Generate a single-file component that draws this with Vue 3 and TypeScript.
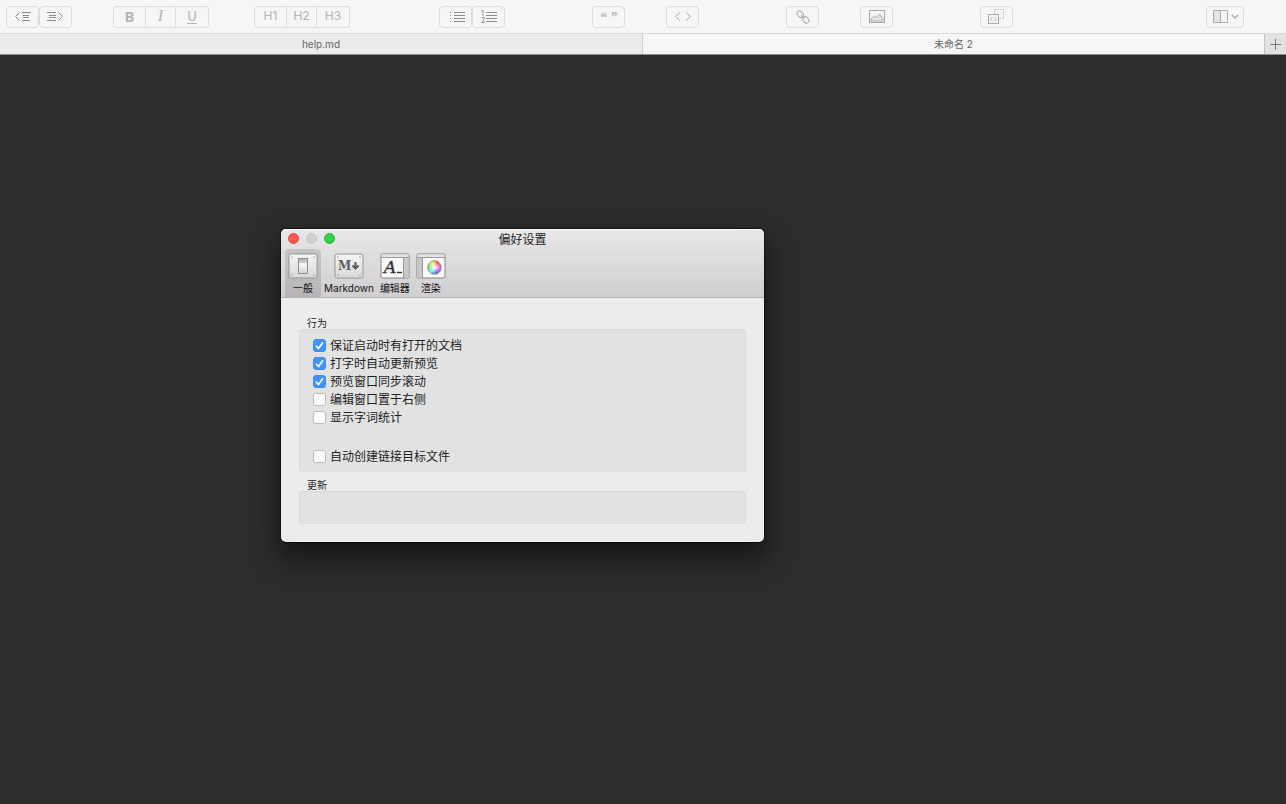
<script setup lang="ts">
import { ref } from 'vue'

interface Option {
  id: string
  label: string
  checked: boolean
  spaced?: boolean
}

const options = ref<Option[]>([
  { id: 'ensure-open', label: '保证启动时有打开的文档', checked: true },
  { id: 'auto-preview', label: '打字时自动更新预览', checked: true },
  { id: 'sync-scroll', label: '预览窗口同步滚动', checked: true },
  { id: 'editor-right', label: '编辑窗口置于右侧', checked: false },
  { id: 'word-count', label: '显示字词统计', checked: false },
  { id: 'create-link', label: '自动创建链接目标文件', checked: false, spaced: true },
])

const panes = [
  { id: 'general', label: '一般' },
  { id: 'markdown', label: 'Markdown' },
  { id: 'editor', label: '编辑器' },
  { id: 'render', label: '渲染' },
]
const activePane = ref('general')

const hues = Array.from({ length: 24 }, (_, i) => {
  const a = (i * 15 * Math.PI) / 180
  const b = ((i * 15 + 16) * Math.PI) / 180
  const p = (t: number) => `${18.5 + 6.5 * Math.cos(t)} ${14.5 + 6.5 * Math.sin(t)}`
  return { d: `M18.5 14.5L${p(a)}A6.5 6.5 0 0 1 ${p(b)}Z`, fill: `hsl(${(300 - i * 15 + 360) % 360} 90% 60%)` }
})
</script>

<template>
  <div class="app">
    <header class="toolbar">
      <div class="group after-indent">
        <button class="tool" aria-label="减少缩进">
          <svg width="17" height="12" viewBox="0 0 17 12" class="dark">
            <path d="M5.500 1.500L1.500 5.500L5.500 9.500M8 1.500H17M9 4.500H15M9 6.500H15M8 9.500H16" />
          </svg>
        </button>
        <button class="tool" aria-label="增加缩进">
          <svg width="17" height="12" viewBox="0 0 17 12" class="dark">
            <path d="M11.500 1.500L15.500 5.500L11.500 9.500M0 1.500H9M2 4.500H9M2 6.500H9M0 9.500H9" />
          </svg>
        </button>
      </div>
      <div class="group joined after-style">
        <button class="tool bold">B</button>
        <button class="tool italic">I</button>
        <button class="tool underline">U</button>
      </div>
      <div class="group joined after-heading">
        <button class="tool">H1</button>
        <button class="tool">H2</button>
        <button class="tool">H3</button>
      </div>
      <div class="group after-wide">
        <button class="tool" aria-label="无序列表">
          <svg width="17" height="12" viewBox="0 0 17 12" class="dark list-icon">
            <path d="M5 1.500H16M5 4.500H16M5 7.500H16M5 10.500H16" />
            <path d="M1 1.500H2M1 4.500H2M1 7.500H2M1 10.500H2" />
          </svg>
        </button>
        <button class="tool" aria-label="有序列表">
          <svg width="18" height="18" viewBox="0 0 18 18" class="dark">
            <path d="M6 4.500H17M6 7.500H17M6 10.500H17M6 13.500H17" />
            <text x="1" y="8" class="digit">1</text>
            <text x="1" y="15" class="digit">2</text>
          </svg>
        </button>
      </div>
      <button class="tool single quote after-narrow" aria-label="引用">“ ”</button>
      <button class="tool single after-wide" aria-label="代码">
        <svg width="18" height="12" viewBox="0 0 18 12" class="medium">
          <path d="M6 1.500L1.500 5.500L6 9.500M12 1.500L16.500 5.500L12 9.500" />
        </svg>
      </button>
      <button class="tool single after-narrow" aria-label="链接">
        <svg width="14" height="14" viewBox="0 0 14 14" class="medium">
          <g transform="rotate(45 7 7)">
            <rect x="-.5" y="4.500" width="7" height="5" rx="2.500" />
            <rect x="7.500" y="4.500" width="7" height="5" rx="2.500" />
            <path d="M4.500 7H9.500" />
          </g>
        </svg>
      </button>
      <button class="tool single after-wide" aria-label="图片">
        <svg width="16" height="14" viewBox="0 0 16 14" class="medium">
          <rect x=".5" y=".5" width="15" height="12" />
          <path class="hill" d="M2 9L5.500 6L7.500 7.500L10.500 4L14 8.500V11H2Z" />
        </svg>
      </button>
      <button class="tool single" aria-label="复制 HTML">
        <svg width="17" height="17" viewBox="0 0 17 17">
          <path d="M6.500 6V1.500H15.500V10.500H11" stroke-dasharray="1.500 1" />
          <rect x=".5" y="6.500" width="10" height="9" class="medium" />
          <path d="M4.500 9L2.500 11L4.500 13M6.500 9L8.500 11L6.500 13" />
        </svg>
      </button>
      <button class="tool layout" aria-label="布局">
        <svg width="27" height="13" viewBox="0 0 27 13" class="medium">
          <rect x="1" y="1" width="7" height="11" class="pane-fill" />
          <path d="M1.500 .500H15.500V12.500H1.500ZM8.500 .500V12.500" />
          <path d="M20 5L23 8L26 5" stroke-width="1.300" />
        </svg>
      </button>
    </header>

    <nav class="tabs">
      <button class="tab">help.md</button>
      <button class="tab current">未命名 2</button>
      <button class="new-tab" aria-label="新建标签页">
        <svg width="11" height="11" viewBox="0 0 11 11"><path d="M5.500 0V11M0 5.500H11" /></svg>
      </button>
    </nav>

    <main class="desktop">
      <section class="window" role="dialog" aria-labelledby="window-title">
        <header class="chrome">
          <div class="titlebar">
            <div class="lights">
              <button class="light close" aria-label="关闭"></button>
              <button class="light minimize" aria-label="最小化"></button>
              <button class="light zoom" aria-label="缩放"></button>
            </div>
            <h1 id="window-title">偏好设置</h1>
          </div>
          <div class="panes">
            <button
              v-for="pane in panes"
              :key="pane.id"
              class="pane"
              :class="{ active: pane.id === activePane }"
              @click="activePane = pane.id"
            >
              <svg width="30" height="26" viewBox="0 0 30 26">
                <defs>
                  <linearGradient id="plate" x1="0" y1="0" x2="0" y2="1">
                    <stop offset="0" stop-color="#f6f6f6" />
                    <stop offset="1" stop-color="#d8d8d8" />
                  </linearGradient>
                  <linearGradient id="knob" x1="0" y1="0" x2="0" y2="1">
                    <stop offset="0" stop-color="#b4b4b4" />
                    <stop offset=".3" stop-color="#d0d0d0" />
                    <stop offset=".34" stop-color="#f8f8f8" />
                    <stop offset="1" stop-color="#d4d4d4" />
                  </linearGradient>
                  <radialGradient id="glow">
                    <stop offset="0" stop-color="#fff" />
                    <stop offset="1" stop-color="#fff" stop-opacity="0" />
                  </radialGradient>
                </defs>
                <template v-if="pane.id === 'general' || pane.id === 'markdown'">
                  <rect x="1" y="1" width="28" height="24" rx="2" fill="url(#plate)" stroke="#969696" />
                  <g fill="#888">
                    <circle cx="4" cy="4" r=".7" /><circle cx="26" cy="4" r=".7" />
                    <circle cx="4" cy="22" r=".7" /><circle cx="26" cy="22" r=".7" />
                  </g>
                </template>
                <rect v-if="pane.id === 'general'" x="10.500" y="5.500" width="9" height="15" fill="url(#knob)" stroke="#8c8c8c" />
                <template v-if="pane.id === 'markdown'">
                  <text x="4" y="17" class="mark">M</text>
                  <path d="M21.500 9V16M18.500 12.500L21.500 15.500L24.500 12.500" fill="none" stroke="#5c5c5c" stroke-width="2" />
                </template>
                <template v-if="pane.id === 'editor' || pane.id === 'render'">
                  <rect x="1" y="1" width="28" height="24" rx="1" fill="#f8f8f8" stroke="#858585" />
                  <path d="M1.500 1.500H28.500V4H1.500Z" fill="#e4e4e4" />
                  <path d="M1 4.500H29" stroke="#999" />
                </template>
                <template v-if="pane.id === 'editor'">
                  <path d="M24 5H28.500V24.500H24Z" fill="#c8c8c8" />
                  <path d="M23.500 5V25" stroke="#999" />
                  <text x="4" y="20" class="letter">A</text>
                  <path d="M17 19.500H22" stroke="#333" stroke-width="1.400" />
                </template>
                <template v-if="pane.id === 'render'">
                  <path d="M1.500 5H6V24.500H1.500Z" fill="#c8c8c8" />
                  <path d="M6.500 5V25" stroke="#999" />
                  <path v-for="hue in hues" :key="hue.fill" :d="hue.d" :fill="hue.fill" />
                  <circle cx="18.500" cy="14.500" r="6" fill="url(#glow)" />
                  <circle cx="18.500" cy="14.500" r="6.800" fill="none" stroke="#777" stroke-width=".8" />
                </template>
              </svg>
              <span>{{ pane.label }}</span>
            </button>
          </div>
        </header>

        <div class="content">
          <fieldset>
            <legend>行为</legend>
            <div class="box behavior">
              <label v-for="option in options" :key="option.id" class="option" :class="{ spaced: option.spaced }" :for="option.id">
                <span class="check">
                  <input :id="option.id" v-model="option.checked" type="checkbox" />
                  <svg v-if="option.checked" width="13" height="13" viewBox="0 0 13 13"><path d="M3 6.800L5.500 9.500L10 3.200" /></svg>
                </span>
                <span class="caption">{{ option.label }}</span>
              </label>
            </div>
          </fieldset>
          <fieldset>
            <legend>更新</legend>
            <div class="box updates"></div>
          </fieldset>
        </div>
      </section>
    </main>
  </div>
</template>

<style>
html,
body,
#app {
  height: 100%;
}
body {
  margin: 0;
}
</style>

<style scoped>
.app {
  display: flex;
  flex-direction: column;
  min-height: 100%;
  background: #2d2d2d;
  font-family: Inter, "Noto Sans CJK SC", sans-serif;
  font-size: 12px;
  color: #222;
}
button {
  margin: 0;
  padding: 0;
  border: 0;
  background: none;
  font: inherit;
  color: inherit;
}
svg {
  display: block;
}
.toolbar {
  display: flex;
  align-items: center;
  box-sizing: border-box;
  height: 34px;
  padding: 0 42px 0 6px;
  background: #f6f6f6;
  border-bottom: 1px solid #dadada;
}
.group {
  display: flex;
}
.tool {
  display: flex;
  align-items: center;
  justify-content: center;
  box-sizing: border-box;
  flex: none;
  width: 33px;
  height: 22px;
  border: 1px solid #dcdcdc;
  border-radius: 4px;
  font-size: 12px;
  line-height: 18px;
  color: #b4b4b4;
}
.joined .tool {
  border-radius: 0;
  padding-bottom: 2px;
}
.joined .tool + .tool {
  border-left: 0;
}
.joined .tool:first-child {
  border-radius: 4px 0 0 4px;
}
.joined .tool:nth-child(2) {
  width: 30px;
}
.joined .tool:last-child {
  border-radius: 0 4px 4px 0;
}
.after-indent {
  margin-right: 41px;
}
.after-style {
  margin-right: 45px;
}
.after-heading {
  margin-right: 89px;
}
.after-wide {
  margin-right: 87px;
}
.after-narrow {
  margin-right: 41px;
}
.tool.bold {
  font-family: "Noto Sans", sans-serif;
  font-size: 15px;
  font-weight: 700;
}
.tool.italic {
  font-family: "Liberation Serif", serif;
  font-size: 16px;
  font-style: italic;
}
.tool.underline {
  font-size: 13px;
  text-decoration: underline;
  text-underline-offset: 2px;
}
.tool.quote {
  font-family: "Liberation Serif", serif;
  font-size: 14px;
  font-weight: 700;
  font-style: italic;
  padding-top: 2px;
}
.tool svg {
  fill: none;
  stroke: #bdbdbd;
}
.tool .medium,
.tool svg.medium {
  stroke: #aaa;
}
.tool svg.dark {
  stroke: #8c8c8c;
}
.tool .list-icon {
  margin-left: 4px;
}
.tool .digit {
  fill: #777;
  stroke: none;
  font-size: 7px;
}
.tool .hill,
.tool .pane-fill {
  fill: #e4e4e4;
}
.tool .pane-fill {
  stroke: none;
}
.layout {
  width: 38px;
  margin-left: auto;
}
.tabs {
  display: flex;
  height: 20px;
  background: #ebebeb;
  border-bottom: 1px solid #8c8c8c;
}
.tab {
  flex: 643 1 0;
  font-size: 10px;
  line-height: 18px;
  padding-bottom: 1px;
  color: #666;
}
.tab.current {
  flex-grow: 622;
  background: #f6f6f6;
  border-left: 1px solid #d2d2d2;
}
.new-tab {
  display: grid;
  place-items: center;
  box-sizing: border-box;
  width: 22px;
  background: #e2e2e2;
  border-left: 1px solid #c4c4c4;
}
.new-tab svg {
  stroke: #777;
}
.desktop {
  position: relative;
  flex: 1;
}
.window {
  position: absolute;
  top: 174px;
  left: 281px;
  width: 483px;
  overflow: hidden;
  border-radius: 5px;
  background: #ececec;
  box-shadow: 0 0 1px 1px rgba(0, 0, 0, 0.45), 0 14px 28px 4px rgba(0, 0, 0, 0.5);
}
.chrome {
  background: linear-gradient(#e9e7e9, #d0ced0);
  border-bottom: 1px solid #b4b4b4;
  box-shadow: inset 0 1px #f4f4f4;
}
.titlebar {
  display: grid;
  grid-template-columns: 1fr auto 1fr;
  height: 20px;
  padding: 0 7px;
}
.lights {
  display: flex;
  gap: 7px;
  padding-top: 4px;
}
.light {
  box-sizing: border-box;
  width: 11px;
  height: 11px;
  border: 1px solid #c4c4c4;
  border-radius: 50%;
  background: #d0d0d0;
}
.close {
  border-color: #e9483f;
  background: #fc5753;
}
.zoom {
  border-color: #29b436;
  background: #33d043;
}
h1 {
  margin: 0;
  font-size: 12px;
  line-height: 22px;
  font-weight: 400;
}
.panes {
  display: flex;
  padding-left: 4px;
}
.pane {
  display: flex;
  flex-direction: column;
  align-items: center;
  box-sizing: border-box;
  min-width: 36px;
  height: 48px;
  padding: 4px 3px 0;
  font-size: 10px;
  line-height: 18px;
  color: #111;
}
.pane.active {
  border-radius: 4px 4px 0 0;
  background: rgba(0, 0, 0, 0.12);
}
.mark {
  font-family: "DejaVu Serif", serif;
  font-size: 12px;
  font-weight: 700;
  fill: #5c5c5c;
}
.letter {
  font-family: "DejaVu Serif", serif;
  font-size: 17px;
  font-style: italic;
  fill: #333;
  stroke: #333;
  stroke-width: 0.4px;
}
.content {
  padding: 17px 18px 18px;
}
fieldset {
  min-width: 0;
  margin: 0;
  padding: 0;
  border: 0;
}
fieldset + fieldset {
  margin-top: 5px;
}
legend {
  padding: 2px 8px 0;
  font-size: 10px;
  line-height: 12px;
}
.box {
  box-sizing: border-box;
  border: 1px solid #dadada;
  border-bottom-color: #dedede;
  border-radius: 4px;
  background: #e2e2e2;
}
.behavior {
  display: flex;
  flex-direction: column;
  align-items: flex-start;
  padding: 6px 13px;
}
.updates {
  height: 33px;
}
.option {
  display: flex;
  align-items: center;
  gap: 4px;
  height: 18px;
}
.option.spaced {
  margin-top: 21px;
}
.caption {
  padding-top: 2px;
  line-height: 16px;
}
.check {
  display: grid;
}
.check > * {
  grid-area: 1 / 1;
}
.check input {
  appearance: none;
  box-sizing: border-box;
  width: 13px;
  height: 13px;
  margin: 0;
  border: 1px solid #bdbdbd;
  border-radius: 3px;
  background: #fff;
}
.check input:checked {
  border-color: #3b8df4;
  background: #3f95fb;
}
.check svg {
  fill: none;
  stroke: #fff;
  stroke-width: 1.600;
  pointer-events: none;
}
</style>
